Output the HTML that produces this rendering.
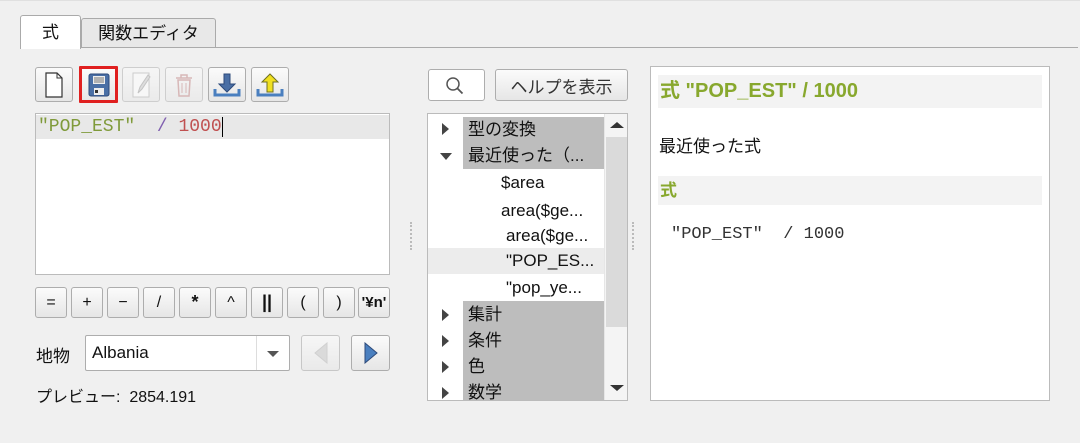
<!DOCTYPE html><html><head><meta charset="utf-8"><style>
body{margin:0;width:1080px;height:443px;background:#f0f0f0;font-family:"Liberation Sans","Noto Sans CJK JP",sans-serif;position:relative;overflow:hidden;color:#111}
.a{position:absolute;box-sizing:border-box}
.btn{position:absolute;box-sizing:border-box;border:1px solid #adadad;border-radius:3px;background:linear-gradient(#fbfbfb,#e6e6e6);display:flex;align-items:center;justify-content:center}
.mono{font-family:"Liberation Mono","Courier New",monospace}
.row{position:absolute;left:0;height:26px;line-height:26px;font-size:17px;white-space:nowrap}
.tri{position:absolute;left:14px;width:0;height:0}
</style></head><body>
<div class="a" style="left:0;top:0;width:1080px;height:1px;background:#e0e0e0"></div>
<div class="a" style="left:20px;top:47px;width:1058px;height:1px;background:#aaa"></div>
<div class="a" style="left:20px;top:15px;width:61px;height:34px;background:#fff;border:1px solid #aaa;border-bottom:none;border-radius:3px 3px 0 0;font-size:17px;text-align:center;line-height:34px">式</div>
<div class="a" style="left:81px;top:18px;width:135px;height:29px;background:#e8e8e8;border:1px solid #aaa;border-bottom:none;border-radius:3px 3px 0 0;font-size:17px;text-align:center;line-height:30px">関数エディタ</div>

<div class="btn" style="left:35px;top:67px;width:38px;height:35px"><svg width="20" height="26"><path d="M2 1h11l5 5v19H2z" fill="#fff" stroke="#333" stroke-width="1.2"/><path d="M13 1v5h5" fill="none" stroke="#333"/></svg></div>
<div class="btn" style="left:79px;top:66px;width:39px;height:37px;border:3px solid #e02020;border-radius:1px"><svg width="24" height="26"><rect x="2" y="2" width="20" height="22" rx="2" fill="#4a6fa5" stroke="#2d4a7a"/><rect x="6" y="4" width="12" height="8" fill="#eee"/><path d="M7 6h10M7 8h10M7 10h10" stroke="#777"/><rect x="7" y="16" width="10" height="7" fill="#eee"/><rect x="8" y="18" width="3" height="3" fill="#333"/></svg></div>
<div class="btn" style="left:122px;top:67px;width:38px;height:35px;opacity:.5"><svg width="20" height="26"><path d="M2 1h16v24H2z" fill="#fff" stroke="#aaa"/><path d="M7 21l2-6 8-12 2 2-8 12z" fill="#ccc" stroke="#999"/></svg></div>
<div class="btn" style="left:165px;top:67px;width:38px;height:35px;opacity:.5"><svg width="20" height="24"><path d="M2 5h16M7 5V2h6v3M4 7h12l-1 16H5z" fill="none" stroke="#c08080" stroke-width="1.5"/><path d="M8 10v10M12 10v10" stroke="#c08080"/></svg></div>
<div class="btn" style="left:208px;top:67px;width:38px;height:35px"><svg width="28" height="26"><path d="M11 2h6v10h5l-8 8-8-8h5z" fill="#4a6fa5" stroke="#2d4a7a"/><path d="M2 17v6h24v-6" fill="none" stroke="#4a7fbf" stroke-width="3"/></svg></div>
<div class="btn" style="left:251px;top:67px;width:38px;height:35px"><svg width="28" height="26"><path d="M11 20h6V10h5L14 2 6 10h5z" fill="#f0e020" stroke="#707020"/><path d="M2 17v6h24v-6" fill="none" stroke="#4a7fbf" stroke-width="3"/></svg></div>

<div class="a" style="left:35px;top:113px;width:355px;height:162px;background:#fff;border:1px solid #bbb"></div>
<div class="a" style="left:36px;top:115px;width:353px;height:24px;background:#e8e8e8"></div>
<div class="a mono" style="left:38px;top:115px;font-size:18px;line-height:24px;white-space:pre"><span style="color:#7f9a3a">"POP_EST"</span>  <span style="color:#8060b0">/</span> <span style="color:#c05050">1000</span><span style="border-left:1.5px solid #000"></span></div>

<div class="btn" style="left:35px;top:287px;width:32px;height:31px;font-size:16px">=</div>
<div class="btn" style="left:71px;top:287px;width:32px;height:31px;font-size:16px">+</div>
<div class="btn" style="left:107px;top:287px;width:32px;height:31px;font-size:16px">−</div>
<div class="btn" style="left:143px;top:287px;width:32px;height:31px;font-size:16px">/</div>
<div class="btn" style="left:179px;top:287px;width:32px;height:31px;font-size:18px;font-weight:bold">*</div>
<div class="btn" style="left:215px;top:287px;width:32px;height:31px;font-size:16px">^</div>
<div class="btn" style="left:251px;top:287px;width:32px;height:31px;font-size:18px;font-weight:bold">||</div>
<div class="btn" style="left:287px;top:287px;width:32px;height:31px;font-size:16px">(</div>
<div class="btn" style="left:323px;top:287px;width:32px;height:31px;font-size:16px">)</div>
<div class="btn" style="left:358px;top:287px;width:32px;height:31px;font-size:15px;font-weight:bold">'¥n'</div>

<div class="a" style="left:36px;top:342px;font-size:17px">地物</div>
<div class="a" style="left:85px;top:335px;width:205px;height:36px;background:#fff;border:1px solid #adadad;border-radius:2px;font-size:17px;line-height:34px;padding-left:6px">Albania</div>
<div class="a" style="left:256px;top:336px;width:1px;height:34px;background:#ddd"></div>
<div class="a" style="left:267px;top:351px;border-left:6px solid transparent;border-right:6px solid transparent;border-top:6px solid #555"></div>
<div class="btn" style="left:301px;top:335px;width:39px;height:36px;opacity:.6"><svg width="16" height="22"><path d="M14 1L2 11l12 10z" fill="#ccc" stroke="#bbb"/></svg></div>
<div class="btn" style="left:351px;top:335px;width:39px;height:36px"><svg width="16" height="22"><path d="M2 1l12 10L2 21z" fill="#4a7fbf" stroke="#2d4a7a"/></svg></div>
<div class="a" style="left:36px;top:383px;font-size:16px">プレビュー:&nbsp; 2854.191</div>

<div class="a" style="left:428px;top:69px;width:57px;height:32px;background:#fff;border:1px solid #adadad;border-radius:3px"><svg style="position:absolute;left:16px;top:6px" width="22" height="20"><circle cx="8" cy="8" r="6" fill="none" stroke="#555" stroke-width="1.5"/><path d="M12.5 12.5l5 5" stroke="#555" stroke-width="1.8"/></svg></div>
<div class="btn" style="left:495px;top:69px;width:133px;height:32px;font-size:17px;color:#333">ヘルプを表示</div>

<div class="a" style="left:410px;top:222px;width:1px;height:28px;border-left:2px dotted #bbb"></div>
<div class="a" style="left:632px;top:222px;width:1px;height:28px;border-left:2px dotted #bbb"></div>

<div class="a" style="left:427px;top:113px;width:201px;height:288px;background:#fff;border:1px solid #bbb;overflow:hidden">
<div class="a" style="left:35px;top:3px;width:141px;height:52px;background:#bdbdbd"></div>
<div class="a" style="left:0;top:134px;width:176px;height:26px;background:#ececec"></div>
<div class="a" style="left:35px;top:187px;width:141px;height:100px;background:#bdbdbd"></div>
<div class="row" style="top:3px;left:40px">型の変換</div>
<div class="row" style="top:29px;left:40px">最近使った（...</div>
<div class="row" style="top:56px;left:73px">$area</div>
<div class="row" style="top:84px;left:73px">area($ge...</div>
<div class="row" style="top:109px;left:78px">area($ge...</div>
<div class="row" style="top:134px;left:78px">"POP_ES...</div>
<div class="row" style="top:161px;left:78px">"pop_ye...</div>
<div class="row" style="top:188px;left:40px">集計</div>
<div class="row" style="top:214px;left:40px">条件</div>
<div class="row" style="top:240px;left:40px">色</div>
<div class="row" style="top:266px;left:40px">数学</div>
<div class="tri" style="top:9px;border-top:6px solid transparent;border-bottom:6px solid transparent;border-left:7px solid #444"></div>
<div class="tri" style="top:39px;left:12px;border-left:6px solid transparent;border-right:6px solid transparent;border-top:7px solid #444"></div>
<div class="tri" style="top:195px;border-top:6px solid transparent;border-bottom:6px solid transparent;border-left:7px solid #444"></div>
<div class="tri" style="top:221px;border-top:6px solid transparent;border-bottom:6px solid transparent;border-left:7px solid #444"></div>
<div class="tri" style="top:247px;border-top:6px solid transparent;border-bottom:6px solid transparent;border-left:7px solid #444"></div>
<div class="tri" style="top:273px;border-top:6px solid transparent;border-bottom:6px solid transparent;border-left:7px solid #444"></div>
<div class="a" style="left:176px;top:0;width:24px;height:287px;background:#f4f4f4;border-left:1px solid #e6e6e6"></div>
<div class="a" style="left:178px;top:23px;width:21px;height:190px;background:#dadada"></div>
<div class="a" style="left:182px;top:8px;border-left:7px solid transparent;border-right:7px solid transparent;border-bottom:6px solid #333"></div>
<div class="a" style="left:182px;top:271px;border-left:7px solid transparent;border-right:7px solid transparent;border-top:6px solid #333"></div>
</div>

<div class="a" style="left:650px;top:66px;width:400px;height:335px;background:#fff;border:1px solid #bbb"></div>
<div class="a" style="left:658px;top:75px;width:384px;height:33px;background:#f3f3f3;color:#88a82e;font-weight:bold;font-size:20px;line-height:33px;padding-left:2px">式 "POP_EST" / 1000</div>
<div class="a" style="left:659px;top:132px;font-size:17px">最近使った式</div>
<div class="a" style="left:658px;top:176px;width:384px;height:29px;background:#f3f3f3;color:#88a82e;font-weight:bold;font-size:17px;line-height:29px;padding-left:2px">式</div>
<div class="a mono" style="left:671px;top:225px;font-size:17px;white-space:pre;color:#333">"POP_EST"  / 1000</div>
</body></html>
